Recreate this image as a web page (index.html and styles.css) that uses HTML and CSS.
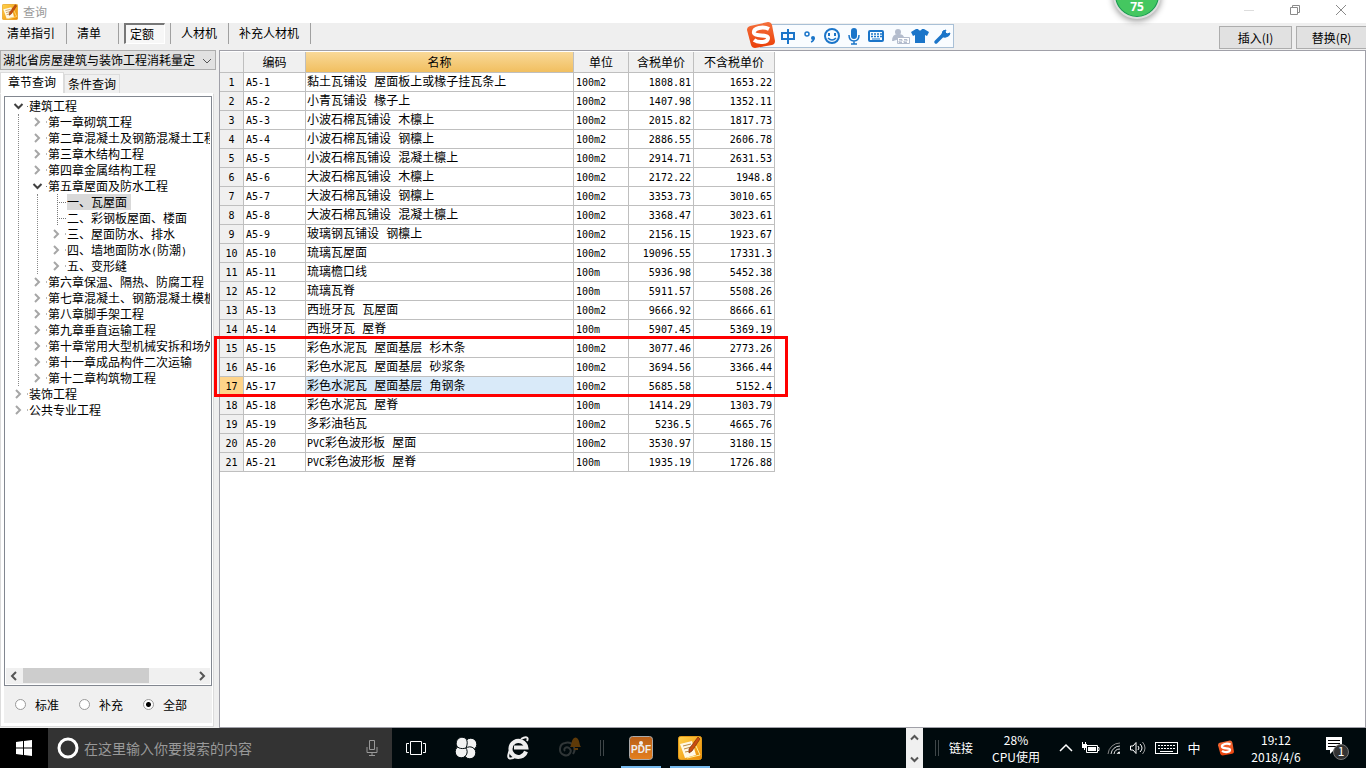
FILE: index.html
```html
<!DOCTYPE html>
<html lang="zh-CN">
<head>
<meta charset="utf-8">
<title>查询</title>
<link rel="stylesheet" href="styles.css">
</head>
<body>
<svg width="0" height="0" class="defs" aria-hidden="true">
  <defs>
    <linearGradient id="gold" x1="0" y1="0" x2="1" y2="1"><stop offset="0" stop-color="#ffd34d"/><stop offset="1" stop-color="#ee8a00"/></linearGradient>
    <linearGradient id="rust" x1="0" y1="0" x2="0" y2="1"><stop offset="0" stop-color="#b95f18"/><stop offset="1" stop-color="#e5801f"/></linearGradient>
    <linearGradient id="sogou" x1="0" y1="0" x2="0" y2="1"><stop offset="0" stop-color="#f4703c"/><stop offset="1" stop-color="#ea3f08"/></linearGradient>
    <symbol id="closed" viewBox="0 0 25 16"><path d="M10 4l4 4-4 4" fill="none" stroke="#a6a6a6" stroke-width="2"/><path d="M21 8h1" stroke="#777"/></symbol>
    <symbol id="open" viewBox="0 0 25 16"><path d="M8.500 6l4 4 4-4" fill="none" stroke="#404040" stroke-width="2"/><path d="M21 8.500h1" stroke="#777"/></symbol>
    <symbol id="leaf" viewBox="0 0 25 16"><path d="M13.500 0v16M13 8.500h9" fill="none" stroke="#777" stroke-dasharray="1 1"/></symbol>
    <symbol id="note" viewBox="0 0 24 24"><rect x=".5" y=".5" width="23" height="23" rx="2" fill="url(#gold)" stroke="#e39a1a"/><path d="M2 8l12-3 4 14-11 3z" fill="#fff8e4"/><path d="M5 10l8-2M6 13l7-2M7 16l5-1" stroke="#bb8b45"/><path d="M11 17l0-4L20 1l2 2-8 12z" fill="#c94d10" stroke="#7b2d06" stroke-width=".7"/><path d="M18 10l4 9-13 3" fill="none" stroke="#fff0a0"/></symbol>
    <symbol id="s" viewBox="0 0 28 28"><path d="M3 5L21 1q3 0 4 3l3 16q0 3-3 4L8 27q-3 0-4-3L0 9q0-3 3-4z" fill="url(#sogou)"/><path d="M22 8C16 5 6 7 7 12c1 4 14 1 14 5 0 5-10 5-14 2" fill="none" stroke="#fff" stroke-width="4"/></symbol>
  </defs>
</svg>

<header class="titlebar">
  <svg class="app-icon" viewBox="0 0 24 24"><use href="#note"/></svg>
  <h1>查询</h1>
  <div class="window-buttons">
    <button aria-label="最小化"><svg viewBox="0 0 12 12"><path d="M1 6.500h10" stroke="#ddd"/></svg></button>
    <button aria-label="还原"><svg viewBox="0 0 12 12"><path d="M1.500 3.500h7v7h-7zM3.500 3V1.500h7v7H9" fill="none" stroke="#8a8a8a"/></svg></button>
    <button aria-label="关闭"><svg viewBox="0 0 12 12"><path d="M1 1l10 10M11 1L1 11" stroke="#8a8a8a"/></svg></button>
  </div>
</header>

<nav class="toolbar">
  <button class="tool">清单指引</button>
  <button class="tool">清单</button>
  <span class="tool-slot"><button class="tool-active">定额</button></span>
  <button class="tool">人材机</button>
  <button class="tool">补充人材机</button>
  <div class="actions">
    <button>插入(I)</button>
    <button>替换(R)</button>
  </div>
</nav>

<main class="workspace">
  <aside class="sidebar">
    <div class="combo">
      <select aria-label="定额库"><option>湖北省房屋建筑与装饰工程消耗量定</option></select>
      <svg viewBox="0 0 10 6"><path d="M1 1l4 4 4-4" fill="none" stroke="#555"/></svg>
    </div>
    <div class="tabs">
      <button class="tab selected">章节查询</button>
      <button class="tab">条件查询</button>
    </div>
    <section class="tab-panel">
      <div class="tree-box">
        <ul class="tree">
          <li><div class="node"><svg><use href="#open"/></svg><span>建筑工程</span></div>
            <ul>
              <li><div class="node"><svg><use href="#closed"/></svg><span>第一章砌筑工程</span></div></li>
              <li><div class="node"><svg><use href="#closed"/></svg><span>第二章混凝土及钢筋混凝土工程</span></div></li>
              <li><div class="node"><svg><use href="#closed"/></svg><span>第三章木结构工程</span></div></li>
              <li><div class="node"><svg><use href="#closed"/></svg><span>第四章金属结构工程</span></div></li>
              <li><div class="node"><svg><use href="#open"/></svg><span>第五章屋面及防水工程</span></div>
                <ul>
                  <li><div class="node"><svg><use href="#leaf"/></svg><span class="current">一、瓦屋面</span></div></li>
                  <li><div class="node"><svg><use href="#leaf"/></svg><span>二、彩钢板屋面、楼面</span></div></li>
                  <li><div class="node"><svg><use href="#closed"/></svg><span>三、屋面防水、排水</span></div></li>
                  <li><div class="node"><svg><use href="#closed"/></svg><span>四、墙地面防水<span class="mono">(</span>防潮<span class="mono">)</span></span></div></li>
                  <li><div class="node"><svg><use href="#closed"/></svg><span>五、变形缝</span></div></li>
                </ul>
              </li>
              <li><div class="node"><svg><use href="#closed"/></svg><span>第六章保温、隔热、防腐工程</span></div></li>
              <li><div class="node"><svg><use href="#closed"/></svg><span>第七章混凝土、钢筋混凝土模板</span></div></li>
              <li><div class="node"><svg><use href="#closed"/></svg><span>第八章脚手架工程</span></div></li>
              <li><div class="node"><svg><use href="#closed"/></svg><span>第九章垂直运输工程</span></div></li>
              <li><div class="node"><svg><use href="#closed"/></svg><span>第十章常用大型机械安拆和场外</span></div></li>
              <li><div class="node"><svg><use href="#closed"/></svg><span>第十一章成品构件二次运输</span></div></li>
              <li><div class="node"><svg><use href="#closed"/></svg><span>第十二章构筑物工程</span></div></li>
            </ul>
          </li>
          <li><div class="node"><svg><use href="#closed"/></svg><span>装饰工程</span></div></li>
          <li><div class="node"><svg><use href="#closed"/></svg><span>公共专业工程</span></div></li>
        </ul>
        <div class="hscroll">
          <svg viewBox="0 0 17 16"><path d="M10 4L6 8l4 4" fill="none" stroke="#555" stroke-width="2"/></svg>
          <div class="track"><div class="thumb"></div></div>
          <svg viewBox="0 0 17 16"><path d="M7 4l4 4-4 4" fill="none" stroke="#555" stroke-width="2"/></svg>
        </div>
      </div>
      <div class="scope">
        <label><input type="radio" name="scope">标准</label>
        <label><input type="radio" name="scope">补充</label>
        <label><input type="radio" name="scope" checked>全部</label>
      </div>
    </section>
  </aside>

  <section class="content">
    <div class="grid-wrap">
      <table class="grid">
        <colgroup><col class="c-no"><col class="c-code"><col class="c-name"><col class="c-unit"><col class="c-tax"><col class="c-net"></colgroup>
        <thead><tr><th></th><th>编码</th><th class="sorted">名称</th><th>单位</th><th>含税单价</th><th>不含税单价</th></tr></thead>
        <tbody>
          <tr><th>1</th><td>A5-1</td><td>黏土瓦铺设 屋面板上或椽子挂瓦条上</td><td>100m2</td><td>1808.81</td><td>1653.22</td></tr>
          <tr><th>2</th><td>A5-2</td><td>小青瓦铺设 椽子上</td><td>100m2</td><td>1407.98</td><td>1352.11</td></tr>
          <tr><th>3</th><td>A5-3</td><td>小波石棉瓦铺设 木檩上</td><td>100m2</td><td>2015.82</td><td>1817.73</td></tr>
          <tr><th>4</th><td>A5-4</td><td>小波石棉瓦铺设 钢檩上</td><td>100m2</td><td>2886.55</td><td>2606.78</td></tr>
          <tr><th>5</th><td>A5-5</td><td>小波石棉瓦铺设 混凝土檩上</td><td>100m2</td><td>2914.71</td><td>2631.53</td></tr>
          <tr><th>6</th><td>A5-6</td><td>大波石棉瓦铺设 木檩上</td><td>100m2</td><td>2172.22</td><td>1948.8</td></tr>
          <tr><th>7</th><td>A5-7</td><td>大波石棉瓦铺设 钢檩上</td><td>100m2</td><td>3353.73</td><td>3010.65</td></tr>
          <tr><th>8</th><td>A5-8</td><td>大波石棉瓦铺设 混凝土檩上</td><td>100m2</td><td>3368.47</td><td>3023.61</td></tr>
          <tr><th>9</th><td>A5-9</td><td>玻璃钢瓦铺设 钢檩上</td><td>100m2</td><td>2156.15</td><td>1923.67</td></tr>
          <tr><th>10</th><td>A5-10</td><td>琉璃瓦屋面</td><td>100m2</td><td>19096.55</td><td>17331.3</td></tr>
          <tr><th>11</th><td>A5-11</td><td>琉璃檐口线</td><td>100m</td><td>5936.98</td><td>5452.38</td></tr>
          <tr><th>12</th><td>A5-12</td><td>琉璃瓦脊</td><td>100m</td><td>5911.57</td><td>5508.26</td></tr>
          <tr><th>13</th><td>A5-13</td><td>西班牙瓦 瓦屋面</td><td>100m2</td><td>9666.92</td><td>8666.61</td></tr>
          <tr><th>14</th><td>A5-14</td><td>西班牙瓦 屋脊</td><td>100m</td><td>5907.45</td><td>5369.19</td></tr>
          <tr><th>15</th><td>A5-15</td><td>彩色水泥瓦 屋面基层 杉木条</td><td>100m2</td><td>3077.46</td><td>2773.26</td></tr>
          <tr><th>16</th><td>A5-16</td><td>彩色水泥瓦 屋面基层 砂浆条</td><td>100m2</td><td>3694.56</td><td>3366.44</td></tr>
          <tr class="active"><th>17</th><td>A5-17</td><td>彩色水泥瓦 屋面基层 角钢条</td><td>100m2</td><td>5685.58</td><td>5152.4</td></tr>
          <tr><th>18</th><td>A5-18</td><td>彩色水泥瓦 屋脊</td><td>100m</td><td>1414.29</td><td>1303.79</td></tr>
          <tr><th>19</th><td>A5-19</td><td>多彩油毡瓦</td><td>100m2</td><td>5236.5</td><td>4665.76</td></tr>
          <tr><th>20</th><td>A5-20</td><td><span class="mono">PVC</span>彩色波形板 屋面</td><td>100m2</td><td>3530.97</td><td>3180.15</td></tr>
          <tr><th>21</th><td>A5-21</td><td><span class="mono">PVC</span>彩色波形板 屋脊</td><td>100m</td><td>1935.19</td><td>1726.88</td></tr>
        </tbody>
      </table>
      <div class="marker"></div>
    </div>
  </section>
</main>

<footer class="taskbar">
  <button class="start" aria-label="开始"><svg width="16" height="16" viewBox="0 0 16 16"><path d="M0 2l7-1v6.500H0zM8 1l8-1v7.500H8zM0 8.500h7V15l-7-1zM8 8.500h8V16l-8-1z" fill="#fff"/></svg></button>
  <div class="search">
    <svg width="22" height="22" viewBox="0 0 22 22"><circle cx="11" cy="11" r="9" fill="none" stroke="#fff" stroke-width="3"/></svg>
    <input type="text" placeholder="在这里输入你要搜索的内容" aria-label="搜索">
    <svg width="12" height="18" viewBox="0 0 12 18"><path d="M3.500 1.500h5v9h-5zM1 8v5.500h10V8M6 13.500V16M3 16.500h6" fill="none" stroke="#999"/></svg>
  </div>
  <div class="tasks">
    <button class="t-view" aria-label="任务视图"><svg width="20" height="14" viewBox="0 0 20 14"><path d="M4.500.5h11v13h-11zM3 2.500H.5v9H3M17 2.500h2.500v9H17" fill="none" stroke="#fff"/></svg></button>
    <button class="t-app" aria-label="风扇"><svg width="22" height="22" viewBox="0 0 22 22"><g fill="#f2f2f2" stroke="#000a0d"><circle cx="7.200" cy="6.200" r="6"/><circle cx="15.800" cy="7.200" r="6"/><circle cx="14.800" cy="15.800" r="6"/><circle cx="6.200" cy="14.800" r="6"/><path d="M11 11C6 12.500 1 11 1.200 6.200 1.500 2 5 0 8 .3c4 .7 5.500 5 3 10.700z"/></g></svg></button>
    <button class="t-app" aria-label="浏览器"><svg width="22" height="24" viewBox="0 0 22 24"><path d="M19 15.500a8 8 0 1 1 .3-4H7" fill="none" stroke="#eee" stroke-width="4"/><path d="M14 3C19 0 22 1 20 5M5 11C1 17 0 22 3 22.500c2 .2 4-.5 7-3" fill="none" stroke="#eee" stroke-width="2"/></svg></button>
    <button class="t-swirl" aria-label="助手"><svg width="28" height="26" viewBox="0 0 28 26"><path d="M10 16c-2-2 1-5 4-3 4 3 0 9-5 7-6-2-5-11 1-12 7-2 12 5 8 11" fill="none" stroke="#303637" stroke-width="2"/><path d="M15 12c2-2 1-9 5.500-9.500C25 3 24 10 26 12zM19 13h4v2h-4z" fill="#5e3a08"/></svg></button>
    <span class="grip"></span>
    <button class="t-open pdf" aria-label="PDF"><svg width="24" height="24" viewBox="0 0 24 24"><rect x=".5" y=".5" width="23" height="23" rx="3" fill="url(#rust)" stroke="#aaa"/><circle cx="12" cy="7" r="2" fill="#eee"/><text x="12" y="17" text-anchor="middle">PDF</text></svg></button>
    <button class="t-open" aria-label="查询"><svg width="24" height="24" viewBox="0 0 24 24"><use href="#note"/></svg></button>
  </div>
  <div class="vscroll">
    <svg width="9" height="7" viewBox="0 0 9 7"><path d="M1 5.500l3.500-3.500L8 5.500" fill="none" stroke="#555" stroke-width="2"/></svg>
    <svg width="9" height="7" viewBox="0 0 9 7"><path d="M1 1.500L4.500 5 8 1.500" fill="none" stroke="#555" stroke-width="2"/></svg>
  </div>
  <div class="tray">
    <span class="grip"></span>
    <span class="links">链接</span>
    <span class="stack cpu"><span>28%</span><span>CPU使用</span></span>
    <svg width="24" height="16" viewBox="0 0 24 16"><path d="M6 11l6-6 6 6" fill="none" stroke="#fff" stroke-width="1.500"/></svg>
    <svg width="24" height="16" viewBox="0 0 24 16"><path d="M8.500 5.500h11v7h-11zM19 7.500h2v3h-2" fill="none" stroke="#fff"/><path d="M10 7h8v4h-8zM4 4h5v4H7v2H6V8H4zM4 2h1v2H4zM7 2h1v2H7z" fill="#fff"/></svg>
    <svg width="24" height="16" viewBox="0 0 24 16"><g fill="none" stroke="#ddd"><path d="M6 14A12 12 0 0 1 18 3" stroke="#888"/><path d="M9 14a9 9 0 0 1 9-8M12 14a6 6 0 0 1 6-5M15 14a3 3 0 0 1 3-2"/></g><circle cx="17" cy="13" r="1" fill="#fff"/></svg>
    <svg width="24" height="16" viewBox="0 0 24 16"><g fill="none" stroke="#fff"><path d="M4.500 6H7l3-3.500v11L7 10H4.500zM12 6q2 2 0 4M14 4q4 4 0 8"/><path d="M16.500 2q5 6 0 12" stroke="#999"/></g></svg>
    <svg width="32" height="16" viewBox="0 0 32 16"><rect x="5.500" y="2.500" width="22" height="11" fill="none" stroke="#fff"/><path d="M8 5.500h18M8 8.500h18" stroke="#fff" stroke-dasharray="2 1"/><path d="M10 11.500h13" stroke="#fff"/></svg>
    <span class="ime">中</span>
    <svg class="s-tray" width="16" height="16" viewBox="0 0 28 28"><use href="#s"/></svg>
    <span class="stack clock"><span>19:12</span><span>2018/4/6</span></span>
    <svg class="notice" width="26" height="26" viewBox="0 0 26 26"><path d="M1 2h16v13H9l-4 4v-4H1z" fill="#fff"/><path d="M3 5.500h12M3 8.500h12M3 11.500h8" stroke="#000"/><circle cx="16" cy="17" r="7.500" fill="#333" stroke="#777"/><text x="16" y="21" text-anchor="middle">1</text></svg>
  </div>
</footer>

<div class="ime-bar">
  <svg width="180" height="22" viewBox="0 0 180 22" fill="none" stroke="#1b75c9" stroke-width="2">
    <path d="M8 8h12v6H8zM14 4v15"/>
    <circle cx="33" cy="9" r="2" stroke-width="1.500"/><circle cx="39" cy="13" r="2" fill="#1b75c9" stroke="none"/><path d="M40 13q0 3-3 4" stroke-width="1.500"/>
    <circle cx="58" cy="11" r="7"/><path d="M55 8v3M61 8v3" /><path d="M54 13q4 4 8 0" stroke-width="1.500"/>
    <rect x="78" y="4" width="4" height="9" rx="2" fill="#1b75c9"/><path d="M75 10q0 6 5 6t5-6M80 16v3M77 19h6" stroke-width="1.500"/>
    <rect x="95" y="6" width="14" height="10" rx="1"/><path d="M97 9h11M97 11.500h11" stroke-width="1.500" stroke-dasharray="2 1"/><path d="M98 14h8" stroke-width="1"/>
    <g stroke="#b3bccd"><circle cx="124" cy="7" r="3" fill="#b3bccd" stroke="none"/><path d="M119 16q0-6 5-6t5 3" fill="#b3bccd"/><path d="M123.500 12.500h12v6h-12zM125 14.500h3v1.500h-3v1.500h3M130 14.500h3v1.500h-3v1.500h3" fill="#fff" stroke-width="1"/></g>
    <path d="M142 4h2q2 3 4 0h2l5 3-2 4-2-1v8h-10v-8l-2 1-2-4z" fill="#1b75c9" stroke="none"/>
    <path d="M162 17l7-7" stroke-width="3.500" stroke-linecap="round"/><path d="M172 5q-4 0-4 4t4 3q4-1 4-4l-3 1-2-2z" fill="#1b75c9" stroke-width="1"/>
  </svg>
  <svg class="ime-logo" viewBox="0 0 28 28"><use href="#s"/></svg>
</div>
<div class="speed">75</div>
</body>
</html>
```
FILE: styles.css
```css
* { box-sizing: border-box; }

body {
  margin: 0;
  height: 100vh;
  display: flex;
  flex-direction: column;
  position: relative;
  overflow: hidden;
  background: #fff;
  color: #000;
  font: 12px/16px "Noto Sans CJK SC", sans-serif;
}

button, input, select { font: inherit; color: inherit; margin: 0; }
button { border: 0; padding: 0; background: none; white-space: nowrap; }
svg { display: block; flex: none; }
.defs { position: absolute; }
.mono { font: 10px/16px "DejaVu Sans Mono", monospace; }

/* Title bar */
.titlebar { display: flex; align-items: center; height: 23px; padding-left: 2px; flex: none; }
.app-icon { width: 16px; height: 16px; }
.titlebar h1 { margin: 0 0 0 5px; font-size: 12px; font-weight: 400; line-height: 14px; color: #999; }
.window-buttons { display: flex; margin-left: auto; padding: 0 2px 4px 0; }
.window-buttons button { width: 46px; display: flex; justify-content: center; }
.window-buttons svg { width: 12px; height: 12px; }

/* Toolbar */
.toolbar { display: flex; align-items: flex-start; height: 27px; flex: none; background: #efefef; }
.tool { height: 21px; padding: 0 11px 2px 10px; border-right: 1px solid #a0a0a0; }
.tool:first-child { padding-left: 7px; }
.tool:nth-child(2) { padding-right: 17px; }
.tool-slot { height: 21px; padding: 0 5px; border-right: 1px solid #a0a0a0; }
.tool-active {
  width: 41px;
  height: 21px;
  padding-left: 4px;
  border: 1px solid #fff;
  border-top: 2px solid #777;
  border-left: 2px solid #777;
  background: #f7f7f7;
  text-align: left;
}
.actions { display: flex; gap: 4px; margin: 3px 0 0 auto; }
.actions button { width: 73px; height: 23px; border: 1px solid #adadad; background: #e1e1e1; }
.actions button:last-child { width: 70px; border-right: 0; }

/* Workspace */
.workspace { flex: 1; display: flex; min-height: 0; background: #efefef; }
.sidebar { width: 219px; flex: none; display: flex; flex-direction: column; padding-right: 3px; }
.combo { position: relative; height: 20px; }
.combo select {
  appearance: none;
  width: 100%;
  height: 20px;
  border: 1px solid #adadad;
  border-radius: 0;
  background: #e1e1e1;
  padding: 0 16px 0 2px;
  line-height: 18px;
}
.combo svg { position: absolute; right: 4px; top: 8px; width: 10px; height: 6px; pointer-events: none; }
.tabs { display: flex; align-items: flex-end; height: 23px; }
.tab { width: 56px; height: 19px; border: 1px solid #dcdcdc; border-bottom: 0; background: #f0f0f0; }
.tab.selected { width: 64px; height: 21px; padding-bottom: 2px; background: #fff; }
.tab-panel {
  flex: 1;
  min-height: 0;
  display: flex;
  flex-direction: column;
  margin: 0 2px 1px 0;
  padding: 2px 1px 3px 3px;
  border: 1px solid #dcdcdc;
  border-top-color: #fff;
  background: #fff;
}
.tree-box {
  flex: 1;
  min-height: 0;
  display: flex;
  flex-direction: column;
  justify-content: space-between;
  border: 1px solid #828790;
  padding: 0 1px 1px;
  background: #fff;
}
.tree, .tree ul { list-style: none; margin: 0; padding: 0; }
.tree { padding-top: 1px; overflow: hidden; }
.tree ul { margin-left: 12px; padding-left: 6px; border-left: 1px dotted #888; }
.node { display: flex; height: 16px; white-space: nowrap; }
.node svg { width: 25px; height: 16px; margin-right: -2px; }
.current { background: #d9d9d9; padding-right: 4px; }
.hscroll { display: flex; height: 16px; background: #f0f0f0; }
.hscroll svg { width: 17px; height: 16px; }
.track { flex: 1; }
.thumb { width: 74%; height: 15px; background: #cdcdcd; }
.scope { display: flex; height: 37px; padding-left: 11px; background: #f0f0f0; }
.scope label { display: flex; align-items: center; width: 64px; gap: 9px; }
.scope input {
  appearance: none;
  width: 11px;
  height: 11px;
  border: 1px solid #999;
  border-radius: 50%;
  background: #fff;
}
.scope input:checked { background: radial-gradient(circle, #000 0 2px, #fff 3px); }

/* Result grid */
.content {
  flex: 1;
  min-width: 0;
  border: 1px solid #a0a0a8;
  background: #fff;
  padding-top: 1px;
}
.grid-wrap { position: relative; width: 555px; }
.grid { width: 100%; table-layout: fixed; border-collapse: separate; border-spacing: 0; }
.c-no { width: 24px; }
.c-code { width: 62px; }
.c-name { width: 268px; }
.c-unit { width: 55px; }
.c-tax { width: 65px; }
.c-net { width: 81px; }
.grid th, .grid td {
  height: 19px;
  padding: 2px 2px 0;
  border: 0 solid #bfbfbf;
  border-width: 0 1px 1px 0;
  font: 10px/16px "DejaVu Sans Mono", monospace;
  white-space: nowrap;
  overflow: hidden;
}
.grid th { background: #f0f0f0; text-align: center; padding: 2px 0 0; }
.grid thead th { height: 21px; padding: 0; font: 12px/16px "Noto Sans CJK SC", sans-serif; }
.grid thead .sorted { background: linear-gradient(#f9d998, #f1bf60); }
.grid td:nth-child(3) { padding: 3px 1px 0; font: 12px/15px "Liberation Mono", "Noto Sans CJK SC", monospace; }
.grid td:nth-child(3) .mono { font: 10px/12px "DejaVu Sans Mono", monospace; }
.grid td:nth-child(n+5) { text-align: right; }
.grid .active th { background: #ffd48a; }
.active td:nth-child(3) { background: #d9eaf9; }
.marker { position: absolute; left: -6px; right: -13px; top: 284px; height: 61px; border: 3px solid #f00; }

/* Taskbar */
.taskbar { display: flex; height: 40px; flex: none; background: #000a0d; color: #fff; }
.taskbar button { display: flex; align-items: center; justify-content: center; }
.start { width: 48px; background: #000; }
.search { width: 344px; display: flex; align-items: center; padding: 0 14px 0 9px; gap: 5px; background: #333; }
.search input {
  flex: 1;
  min-width: 0;
  border: 0;
  padding: 0;
  outline: 0;
  background: none;
  font-size: 14px;
}
.search input::placeholder { color: #999; opacity: 1; }
.tasks { flex: 1; display: flex; }
.t-view { width: 48px; }
.t-app { width: 52px; }
.t-swirl { width: 50px; }
.grip { width: 4px; height: 16px; align-self: center; border: 1px solid #3f4648; border-width: 0 1px; }
.tasks .grip { margin: 0 13px 0 6px; }
.taskbar .t-open { width: 40px; margin: 0 5px 0 4px; border-top: 2px solid transparent; border-bottom: 2px solid #76b9ed; }
.pdf text { font: bold 10px "Liberation Sans", sans-serif; fill: #eee; }
.vscroll { width: 17px; display: flex; flex-direction: column; align-items: center; justify-content: space-between; padding: 6px 0 5px; background: #f0f0f0; }
.tray { display: flex; align-items: center; padding-right: 15px; }
.tray .grip { margin: 0 10px 0 12px; }
.links { width: 26px; white-space: nowrap; }
.stack { display: flex; flex-direction: column; align-items: center; line-height: 17px; }
.cpu { width: 60px; margin: 0 8px 0 11px; }
.ime { width: 24px; text-align: center; font-size: 13px; }
.s-tray { margin: 0 12px 0 12px; }
.clock { width: 60px; }
.notice { margin-left: 19px; }
.notice text { font: 12px "Noto Sans CJK SC", sans-serif; fill: #fff; }

/* Floating widgets */
.ime-bar {
  position: absolute;
  left: 760px;
  top: 24px;
  width: 194px;
  height: 24px;
  padding-left: 13px;
  border: 1px solid #a9c0d6;
  background: #f9fcff;
}
.ime-logo { position: absolute; left: -14px; top: -4px; width: 28px; height: 28px; }
.speed {
  position: absolute;
  left: 1113px;
  top: -29px;
  width: 48px;
  height: 48px;
  padding-top: 25px;
  border: 2px solid #ddd;
  border-radius: 50%;
  background: #44c760;
  box-shadow: inset 0 0 0 1px #199655, 0 2px 6px #999;
  color: #fff;
  text-align: center;
  font: bold 12px/18px "Open Sans", sans-serif;
}
```
